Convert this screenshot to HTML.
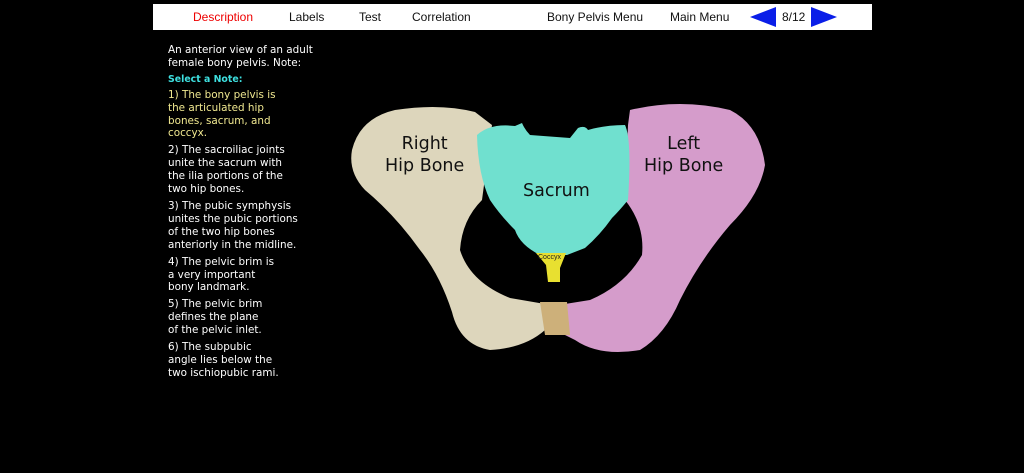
<!DOCTYPE html>
<html><head><style>
body{margin:0;width:1024px;height:473px;background:#000;overflow:hidden;font-family:"Liberation Sans",Verdana,sans-serif;position:relative}
#nav{position:absolute;left:153px;top:4px;width:719px;height:26px;background:#fff;font-size:12px;color:#111}
#nav span{position:absolute;top:6px}
#txt{position:absolute;left:168px;top:44px;font-family:"DejaVu Sans",Verdana,sans-serif;font-size:10.4px;line-height:12.9px;color:#fff;width:190px;white-space:nowrap}
#txt p{margin:0 0 4px}
.l{position:absolute;font-family:"DejaVu Sans",sans-serif;font-size:17.5px;color:#111;text-align:center;line-height:22px}
</style></head><body>
<div id="nav">
<span style="left:40px;color:#e00">Description</span>
<span style="left:136px">Labels</span>
<span style="left:206px">Test</span>
<span style="left:259px">Correlation</span>
<span style="left:394px">Bony Pelvis Menu</span>
<span style="left:517px">Main Menu</span>
<svg style="position:absolute;left:597px;top:3px" width="26" height="20"><polygon points="0,10 26,0 26,20" fill="#0a1ee8"/></svg>
<span style="left:629px">8/12</span>
<svg style="position:absolute;left:658px;top:3px" width="26" height="20"><polygon points="26,10 0,0 0,20" fill="#0a1ee8"/></svg>
</div>
<div id="txt">
<p>An anterior view of an adult<br>female bony pelvis. Note:</p>
<p style="color:#3ee0e0;font-size:9.4px;font-weight:bold;margin-bottom:2px">Select a Note:</p>
<p style="color:#f0e890">1) The bony pelvis is<br>the articulated hip<br>bones, sacrum, and<br>coccyx.</p>
<p>2) The sacroiliac joints<br>unite the sacrum with<br>the ilia portions of the<br>two hip bones.</p>
<p>3) The pubic symphysis<br>unites the pubic portions<br>of the two hip bones<br>anteriorly in the midline.</p>
<p>4) The pelvic brim is<br>a very important<br>bony landmark.</p>
<p>5) The pelvic brim<br>defines the plane<br>of the pelvic inlet.</p>
<p>6) The subpubic<br>angle lies below the<br>two ischiopubic rami.</p>
</div>
<svg style="position:absolute;left:0;top:0" width="1024" height="473">
<path d="M352 150 Q360 118 395 110 Q440 103 475 112 L492 125 L482 200 Q462 220 460 250 Q470 282 510 298 L545 304 L545 330 Q525 348 490 350 Q460 345 452 312 Q440 275 420 250 Q395 215 365 190 Q348 172 352 150Z" fill="#ddd6bc"/>
<path d="M630 110 Q680 98 730 110 Q760 125 765 165 Q760 195 730 225 Q700 260 680 300 Q665 335 640 350 Q600 357 575 340 L565 335 L565 304 L590 300 Q625 285 642 255 Q645 225 625 200 L628 125 Z" fill="#d59ccb"/>
<path d="M540 302 L567 302 L570 335 L545 335Z" fill="#cdb07a"/>
<path d="M477 135 Q490 123 515 126 L522 123 Q525 130 530 135 L570 138 L578 128 Q585 125 588 130 Q605 125 625 125 Q632 140 628 200 Q620 210 612 218 Q600 235 585 248 L567 255 L540 255 Q520 245 515 230 Q500 215 490 200 Q478 175 477 135Z" fill="#70e0cf"/>
<path d="M536 253 L566 253 L560 268 L560 282 L548 282 L546 265Z" fill="#e8e030"/>
</svg>
<div class="l" style="left:385px;top:133px">Right<br>Hip Bone</div>
<div class="l" style="left:644px;top:133px">Left<br>Hip Bone</div>
<div class="l" style="left:523px;top:180px">Sacrum</div>
<div style="position:absolute;left:538px;top:254px;font-size:7px;color:#222">Coccyx</div>
</body></html>
